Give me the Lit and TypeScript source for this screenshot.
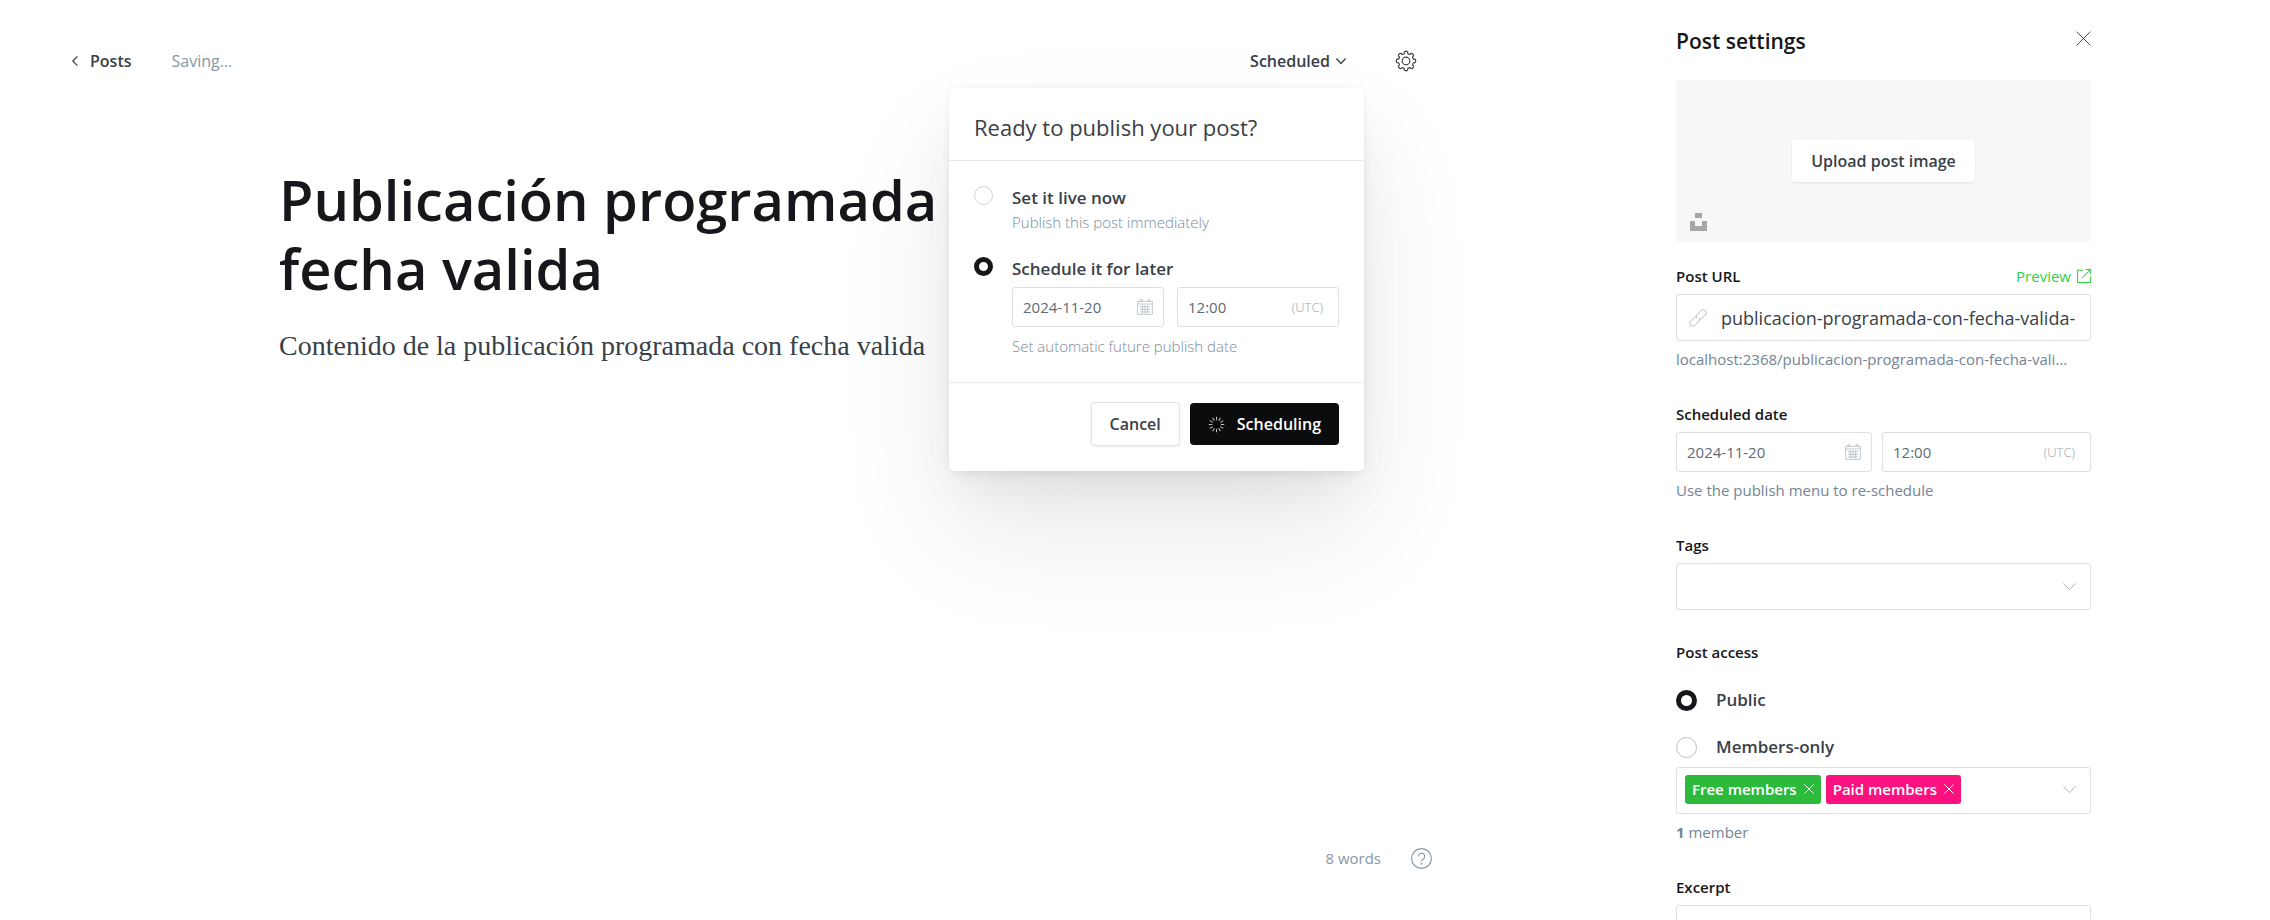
import { LitElement, html, css, svg } from "lit";
import { customElement, state } from "lit/decorators.js";

const gearPath = (() => {
  const teeth = 8;
  const pts: string[] = [];
  for (let i = 0; i < teeth; i++) {
    const a = (i * 2 * Math.PI) / teeth - Math.PI / 2;
    const at = (r: number, d: number) =>
      `${(12 + r * Math.cos(a + d)).toFixed(2)} ${(12 + r * Math.sin(a + d)).toFixed(2)}`;
    pts.push(`${i ? "L" : "M"}${at(9.2, -0.24)}`);
    pts.push(`Q${at(11.5, -0.22)} ${at(11.6, -0.1)}`);
    pts.push(`L${at(11.6, 0.1)}`);
    pts.push(`Q${at(11.5, 0.22)} ${at(9.2, 0.24)}`);
    pts.push(`Q${at(8.4, 0.39)} ${at(9.2, 0.54)}`);
  }
  return pts.join("") + "Z";
})();

const icons = {
  back: svg`<path d="M13 1 2 12l11 11" />`,
  down: svg`<path d="m1 6 11 12L23 6" />`,
  close: svg`<path d="m1 1 22 22M23 1 1 23" />`,
  gear: svg`<path d=${gearPath} /><circle cx="12" cy="12" r="4.6" />`,
  calendar: svg`<path d="M1 3.500h22v19.500H1zM1 7.500h22M4.500 11.500h15M4.500 15.500h15M4.500 19.500h15M8 9.500v12M12 9.500v12M16 9.500v12" /><circle cx="6" cy="2.200" r="1.800" /><circle cx="18" cy="2.200" r="1.800" />`,
  link: svg`<g transform="rotate(-45 12 12)"><path d="M11 7.500H1a4.500 4.500 0 0 0 0 9h8.500a4.500 4.500 0 0 0 4.300-3.200M13 16.500h10a4.500 4.500 0 0 0 0-9h-8.500a4.500 4.500 0 0 0-4.300 3.200" /></g>`,
  external: svg`<path d="M11 2H1v21h22V13M9 15 22.500 1.500M15 1h8v8" />`,
  help: svg`<circle cx="12" cy="12" r="11.300" /><path d="M8.500 9.500a3.600 3.600 0 1 1 5.600 3c-1.400 1-2.100 1.500-2.100 3" /><circle cx="12" cy="18" r=".5" />`,
  spinner: svg`${Array.from({ length: 12 }, (_, i) => svg`<path d="M12 1v5" transform="rotate(${i * 30} 12 12)" />`)}`,
};

const icon = (name: keyof typeof icons, cls: string) => html`
  <svg class="icon ${cls}" viewBox="0 0 24 24" aria-hidden="true">${icons[name]}</svg>
`;

const shared = css`
  * { box-sizing: border-box; }
  button, input, select, textarea { font: inherit; color: inherit; margin: 0; }
  button { cursor: pointer; }
  .icon {
    display: block;
    flex: none;
    fill: none;
    stroke: currentColor;
    stroke-width: 1.5;
    overflow: visible;
  }
  .plain { border: 0; background: none; padding: 0; display: flex; align-items: center; }
  .radio {
    appearance: none;
    flex: none;
    background: #fff;
    border: 1px solid #ced4d9;
    border-radius: 50%;
  }
  .radio:checked { border: 5px solid #15171a; }
  .field {
    display: flex;
    align-items: center;
    min-width: 0;
    border: 1px solid #dddfe2;
    border-radius: 3px;
    background: #fff;
  }
  .field input {
    flex: 1;
    min-width: 0;
    border: 0;
    outline: 0;
    padding: 0;
    background: none;
  }
  .datetime { display: grid; }
  .datetime .field {
    height: 40px;
    padding: 0 10px;
    font-size: 15px;
    color: #5d6a77;
  }
  .datetime .zone { font-size: 13px; font-weight: 300; color: #9aa6b2; padding-right: 5px; }
  .calendar { width: 16px; height: 16px; color: #b4bcc4; stroke-width: 1.2; }
`;

@customElement("publish-menu")
class PublishMenu extends LitElement {
  static styles = [
    shared,
    css`
      :host {
        display: block;
        background: #fff;
        border-radius: 5px;
        box-shadow: 0 0 7px rgba(0, 0, 0, 0.05), 0 7px 14px -5px rgba(0, 0, 0, 0.06),
          0 24px 48px -8px rgba(0, 0, 0, 0.06), 0 60px 120px rgba(0, 0, 0, 0.09);
      }
      .head {
        margin: 0;
        padding: 23px 25px 17px;
        border-bottom: 1px solid #e8eaed;
        font-size: 22px;
        line-height: 32px;
        font-weight: 400;
        color: #394047;
      }
      .body {
        display: flex;
        flex-direction: column;
        gap: 23px;
        padding: 25px 25px 24px;
        border-bottom: 1px solid #e8eaed;
      }
      .option { display: flex; gap: 19px; align-items: flex-start; }
      .radio { width: 19px; height: 19px; }
      .content { flex: 1; min-width: 0; }
      .title { display: block; font-size: 17px; line-height: 24px; font-weight: 600; color: #394047; }
      .note { margin: 0; font-size: 15px; line-height: 24px; font-weight: 300; color: #7c8b9a; }
      .datetime { grid-template-columns: minmax(0, 152fr) minmax(0, 162fr); gap: 13px; margin: 6px 0 7px; }
      .foot { display: flex; justify-content: flex-end; align-items: center; gap: 10px; padding: 19px 25px 25px; }
      .cancel, .go {
        display: flex;
        align-items: center;
        border-radius: 4px;
        font-size: 16px;
        font-weight: 600;
      }
      .cancel {
        height: 44px;
        padding: 0 18px;
        border: 1px solid #dfe3e8;
        background: #fff;
        color: #394047;
        box-shadow: 0 1px 2px rgba(0, 0, 0, 0.08);
      }
      .go { height: 42px; padding: 0 18px; gap: 12px; border: 0; background: #0b0c0e; color: #fff; }
      .spinner { width: 17px; height: 17px; stroke-width: 1.4; opacity: 0.75; }
    `,
  ];

  render() {
    return html`
      <h2 class="head">Ready to publish your post?</h2>
      <div class="body">
        <div class="option">
          <input class="radio" type="radio" name="when" id="now" />
          <div class="content">
            <label class="title" for="now">Set it live now</label>
            <p class="note">Publish this post immediately</p>
          </div>
        </div>
        <div class="option">
          <input class="radio" type="radio" name="when" id="later" checked />
          <div class="content">
            <label class="title" for="later">Schedule it for later</label>
            <div class="datetime">
              <div class="field">
                <input aria-label="Publish date" value="2024-11-20" />${icon("calendar", "calendar")}
              </div>
              <div class="field">
                <input aria-label="Publish time" value="12:00" /><span class="zone">(UTC)</span>
              </div>
            </div>
            <p class="note">Set automatic future publish date</p>
          </div>
        </div>
      </div>
      <div class="foot">
        <button class="cancel">Cancel</button>
        <button class="go">${icon("spinner", "spinner")}Scheduling</button>
      </div>
    `;
  }
}

@customElement("post-settings")
class PostSettings extends LitElement {
  @state() tiers = [
    { name: "Free members", cls: "free" },
    { name: "Paid members", cls: "paid" },
  ];

  static styles = [
    shared,
    css`
      :host { display: block; min-height: 0; color: #15171a; }
      .head { display: flex; justify-content: space-between; align-items: flex-start; padding-top: 26px; }
      h2 { margin: 0; font-size: 21px; line-height: 30px; font-weight: 600; }
      .x { padding-top: 5px; color: #394047; }
      .x .icon { width: 15px; height: 15px; }
      .upload {
        display: grid;
        place-items: center;
        position: relative;
        height: 162px;
        margin-top: 24px;
        border-radius: 3px;
        background: #f6f7f9;
      }
      .pick {
        height: 42px;
        padding: 0 19px;
        border: 0;
        border-radius: 3px;
        background: #fff;
        box-shadow: 0 1px 2px rgba(0, 0, 0, 0.08);
        color: #394047;
        font-size: 16px;
        font-weight: 600;
      }
      .unsplash { position: absolute; left: 14px; bottom: 11px; }
      .unsplash svg { width: 17px; height: 18px; fill: #a6a6a6; display: block; }
      .group { display: flex; flex-direction: column; padding-top: 31px; }
      .first { padding-top: 22px; }
      .access { padding-top: 30px; }
      .label { font-size: 15px; line-height: 24px; font-weight: 600; }
      .row { display: flex; justify-content: space-between; align-items: center; }
      .preview {
        display: flex;
        align-items: center;
        gap: 6px;
        font-size: 15px;
        line-height: 24px;
        color: #30cf43;
        text-decoration: none;
      }
      .preview .icon { width: 14px; height: 14px; stroke-width: 1.8; }
      .tall { height: 47px; margin-top: 6px; }
      .url { padding: 0 15px 0 13px; gap: 15px; font-size: 18px; color: #394047; }
      .link { width: 16px; height: 16px; color: #b4bbc3; stroke-width: 1.4; }
      .help { margin: 0; padding-top: 6px; font-size: 15px; line-height: 24px; color: #738495; }
      .path { padding-right: 16px; overflow: hidden; white-space: nowrap; text-overflow: ellipsis; }
      .datetime { grid-template-columns: minmax(0, 196fr) minmax(0, 209fr); gap: 10px; margin-top: 6px; }
      .choice { position: relative; display: flex; align-items: center; }
      .choice select {
        appearance: none;
        width: 100%;
        height: 100%;
        border: 0;
        padding: 0 40px 0 10px;
        background: none;
      }
      .choice .icon { color: #9aa6b3; width: 13px; height: 13px; }
      .choice .over { position: absolute; right: 14px; pointer-events: none; }
      .pick-radio { display: flex; align-items: center; gap: 19px; font-size: 17px; line-height: 24px; font-weight: 600; color: #394047; }
      .radio { width: 21px; height: 21px; border-color: #b8c0c8; }
      .public { padding-top: 24px; }
      .members { padding-top: 23px; }
      .tokens { margin-top: 8px; padding: 0 14px 3px 8px; gap: 5px; }
      .choice .token {
        display: flex;
        align-items: center;
        gap: 7px;
        height: 29px;
        padding: 0 7px;
        border: 0;
        border-radius: 3px;
        color: #fff;
        font-size: 15px;
        font-weight: 600;
      }
      .token .icon { width: 10px; height: 10px; color: #fff; stroke-width: 2.4; }
      .free { background: #2bba3c; }
      .paid { background: #fb127f; }
      .more { margin-left: auto; }
      .area { display: block; width: 100%; min-height: 100px; resize: none; }
    `,
  ];

  render() {
    return html`
      <header class="head">
        <h2>Post settings</h2>
        <button class="plain x" aria-label="Close">${icon("close", "")}</button>
      </header>
      <div class="upload">
        <button class="pick">Upload post image</button>
        <button class="plain unsplash" aria-label="Unsplash">
          <svg viewBox="0 0 17 18"><path d="M5 0h7v5H5zM0 8h5v5h7V8h5v10H0z" /></svg>
        </button>
      </div>
      <div class="group first">
        <div class="row">
          <label class="label" for="url">Post URL</label>
          <a class="preview" href="#preview">Preview${icon("external", "")}</a>
        </div>
        <div class="field tall url">
          ${icon("link", "link")}<input id="url" value="publicacion-programada-con-fecha-valida-2" />
        </div>
        <p class="help path">localhost:2368/publicacion-programada-con-fecha-valida-2/</p>
      </div>
      <div class="group">
        <label class="label" for="date">Scheduled date</label>
        <div class="datetime">
          <div class="field"><input id="date" value="2024-11-20" />${icon("calendar", "calendar")}</div>
          <div class="field"><input aria-label="Time" value="12:00" /><span class="zone">(UTC)</span></div>
        </div>
        <p class="help">Use the publish menu to re-schedule</p>
      </div>
      <div class="group">
        <label class="label" for="tags">Tags</label>
        <div class="field tall choice">
          <select id="tags"><option></option></select>
          ${icon("down", "over")}
        </div>
      </div>
      <div class="group access" role="radiogroup" aria-labelledby="access">
        <span class="label" id="access">Post access</span>
        <label class="pick-radio public"><input class="radio" type="radio" name="access" checked />Public</label>
        <label class="pick-radio members"><input class="radio" type="radio" name="access" />Members-only</label>
        <div class="field tall tokens choice">
          ${this.tiers.map(
            (t) => html`<button class="token ${t.cls}">${t.name}${icon("close", "")}</button>`
          )}
          <button class="plain more" aria-label="Choose members">${icon("down", "")}</button>
        </div>
        <p class="help"><b>1</b> member</p>
      </div>
      <div class="group">
        <label class="label" for="excerpt">Excerpt</label>
        <textarea class="field tall area" id="excerpt"></textarea>
      </div>
    `;
  }
}

@customElement("app-root")
class AppRoot extends LitElement {
  static styles = [
    shared,
    css`
      :host {
        display: grid;
        grid-template-columns: minmax(0, 1fr) 415px;
        grid-template-rows: minmax(0, 1fr);
        column-gap: 244px;
        height: 100vh;
        box-sizing: border-box;
        padding-right: 179px;
        overflow: hidden;
        background: #fff;
        font-family: "Open Sans", "Noto Sans", sans-serif;
      }
      .editor { position: relative; display: flex; flex-direction: column; min-width: 0; }
      .bar { display: flex; align-items: center; padding: 45px 16px 0 72px; color: #394047; font-size: 16px; line-height: 32px; }
      .posts { display: flex; align-items: center; gap: 8px; color: inherit; text-decoration: none; font-weight: 600; }
      .back { width: 10px; height: 10px; stroke-width: 3; }
      .saving { padding-left: 40px; color: #8897a6; }
      .status { margin-left: auto; gap: 6px; font-weight: 600; }
      .status .icon { width: 10px; height: 10px; stroke-width: 3; }
      .cog { margin-left: 50px; }
      .cog .icon { width: 20px; height: 20px; stroke-width: 1.4; }
      .canvas { flex: 1; padding: 88px 0 0 279px; max-width: 1100px; }
      h1 { margin: 0; font-size: 56px; line-height: 69px; font-weight: 600; color: #15171a; }
      .text { margin: 0; padding-top: 23px; font-family: "Liberation Serif", serif; font-size: 28px; line-height: 40px; color: #394047; }
      .foot { display: flex; justify-content: flex-end; align-items: center; gap: 30px; padding-bottom: 46px; font-size: 15px; line-height: 32px; color: #8897a6; }
      .foot .icon { width: 21px; height: 21px; stroke-width: 1.3; }
      .menu { position: absolute; top: 88px; right: 68px; width: 415px; }
    `,
  ];

  render() {
    return html`
      <main class="editor">
        <header class="bar">
          <a class="posts" href="#posts">${icon("back", "back")}Posts</a>
          <span class="saving">Saving...</span>
          <button class="plain status">Scheduled${icon("down", "")}</button>
          <button class="plain cog" aria-label="Settings">${icon("gear", "")}</button>
        </header>
        <article class="canvas">
          <h1>Publicación programada con fecha valida</h1>
          <p class="text">Contenido de la publicación programada con fecha valida</p>
        </article>
        <footer class="foot">
          <span>8 words</span>
          <button class="plain" aria-label="Help">${icon("help", "")}</button>
        </footer>
        <publish-menu class="menu"></publish-menu>
      </main>
      <post-settings></post-settings>
    `;
  }
}
